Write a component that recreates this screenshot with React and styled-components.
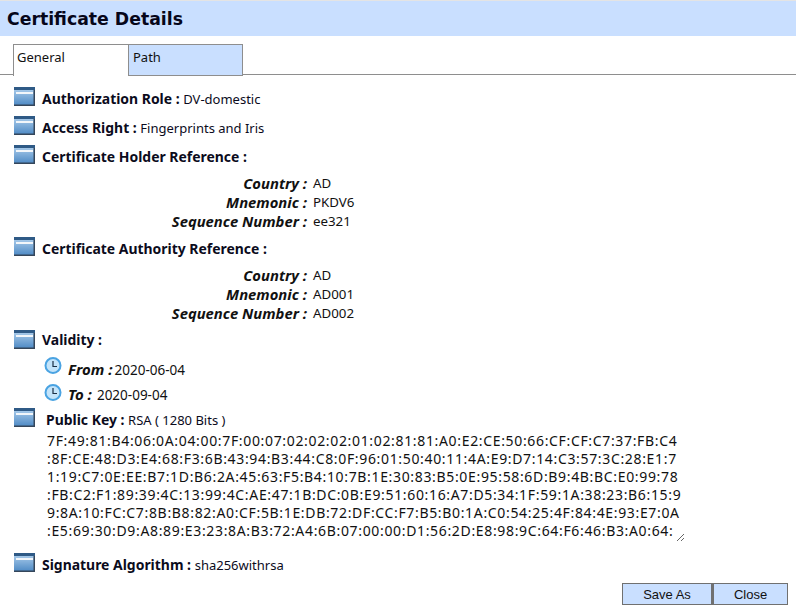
import React from "react";
import styled, { createGlobalStyle } from "styled-components";

const Global = createGlobalStyle`
  html, body { margin: 0; padding: 0; background: #fff; }
  body { font-family: "Noto Sans", "Open Sans", sans-serif; color: #111; }
`;
const Page = styled.div`
  width: 796px; height: 611px; display: flex; flex-direction: column; overflow: hidden; background: #fff;
  border-top: 1px solid #e4e4e4; box-sizing: border-box;
`;
const Header = styled.h1`
  margin: 0; height: 35px; line-height: 37px; padding-left: 7px; background: #c9dfff;
  font-size: 17.3px; font-weight: 700; color: #06061a; font-family: "DejaVu Sans", sans-serif;
`;
const TabBar = styled.div`
  display: flex; margin-top: 8px; padding-left: 13px; border-bottom: 1px solid #8e8e8e; box-sizing: border-box; height: 31px;
`;
const Tab = styled.div`
  width: ${p => p.$active ? 116 : 114}px; height: 32px; box-sizing: border-box;
  border: 1px solid #8e8e8e; border-left-width: ${p => p.$active ? "1px" : "0"};
  border-bottom-width: ${p => p.$active ? "0" : "1px"};
  background: ${p => p.$active ? "#fff" : "#c9dfff"};
  padding: 3px ${p => p.$active ? 3 : 4}px; font-size: 13px; line-height: 18px;
`;
const Body = styled.div`
  display: flex; flex-direction: column; padding: 12px 0 0 14px; flex: 1;
`;
const Row = styled.div`
  display: flex; align-items: flex-start; height: ${p => p.$h || 29}px; gap: 7px;
`;
const BarIcon = () => (
  <svg width="21" height="19" viewBox="0 0 21 19">
    <defs><linearGradient id="b" x1="0" y1="0" x2="0" y2="1"><stop offset="0" stopColor="#b4d3ef"/><stop offset="1" stopColor="#4a87c3"/></linearGradient></defs>
    <rect x="0" y="0" width="21" height="19" fill="url(#b)"/>
    <rect x="0" y="0" width="21" height="3" fill="#2f5a86"/>
    <rect x="2" y="5" width="17" height="2" fill="#f2f6fa"/>
    <rect x="19.5" y="3" width="1.5" height="16" fill="#35465a"/>
    <rect x="0" y="17.5" width="21" height="1.5" fill="#35465a"/>
  </svg>
);
const ClockIcon = () => (
  <svg width="18" height="17" viewBox="0 0 18 17">
    <circle cx="9" cy="8.5" r="7.5" fill="#c4e4fa" stroke="#4aa3e2" strokeWidth="2"/>
    <path d="M9 4V9.5H13" fill="none" stroke="#1c2f44" strokeWidth="1.2"/>
  </svg>
);
const Label = styled.span`
  font-weight: 700; font-size: 13.95px; line-height: 18px; margin-top: ${p => p.$top ?? 3}px; color: #0b0b1c;
`;
const Value = styled.span`font-weight: 400; font-size: 13px;`;
const SubGrid = styled.div`
  display: grid; grid-template-columns: 293px auto; justify-content: start; column-gap: 6px; grid-auto-rows: 19px; height: ${p => p.$h}px;
`;
const SubKey = styled.span`text-align: right; font-style: italic; font-weight: 700; font-size: 14.8px; line-height: 19px; white-space: nowrap;`;
const SubVal = styled.span`font-size: 13.3px; line-height: 19px;`;
const ClockRow = styled.div`
  display: flex; align-items: flex-start; gap: 6px; height: ${p => p.$h}px; padding-left: 30px; font-size: 13.5px;
`;
const ClockText = styled.span`line-height: 18px; margin-top: ${p => p.$top}px;`;
const ClockKey = styled.b`font-style: italic; font-size: 15px; margin-right: ${p => p.$gap}px;`;
const KeyBlock = styled.div`display: flex; flex-direction: column; flex: 1;`;
const KeyTitle = styled.div`padding-left: 4px; line-height: 18px; margin-top: 3px; display: flex;`;
const KeyArea = styled.textarea`
  width: 640px; height: 112px; margin: 1px 0 0 3px; padding: 2px; border: none; outline: none; background: #fff; box-sizing: border-box;
  font-family: "Noto Sans", sans-serif; font-size: 14px; letter-spacing: .66px; line-height: 18px; color: #111; white-space: pre; overflow: hidden; resize: both;
`;
const Footer = styled.div`
  display: flex; justify-content: flex-end; padding-right: 8px; margin-top: auto; margin-bottom: 6px;
`;
const Btn = styled.button`
  width: 90px; height: 22px; box-sizing: border-box; border: 1px solid #707070; background: #c9dfff; font-family: "Liberation Sans", sans-serif; font-size: 13px; color: #111; padding: 0;
  & + & { width: 76px; border-left-width: 2px; }
`;
const KEY = `7F:49:81:B4:06:0A:04:00:7F:00:07:02:02:02:01:02:81:81:A0:E2:CE:50:66:CF:CF:C7:37:FB:C4
:8F:CE:48:D3:E4:68:F3:6B:43:94:B3:44:C8:0F:96:01:50:40:11:4A:E9:D7:14:C3:57:3C:28:E1:7
1:19:C7:0E:EE:B7:1D:B6:2A:45:63:F5:B4:10:7B:1E:30:83:B5:0E:95:58:6D:B9:4B:BC:E0:99:78
:FB:C2:F1:89:39:4C:13:99:4C:AE:47:1B:DC:0B:E9:51:60:16:A7:D5:34:1F:59:1A:38:23:B6:15:9
9:8A:10:FC:C7:8B:B8:82:A0:CF:5B:1E:DB:72:DF:CC:F7:B5:B0:1A:C0:54:25:4F:84:4E:93:E7:0A
:E5:69:30:D9:A8:89:E3:23:8A:B3:72:A4:6B:07:00:00:D1:56:2D:E8:98:9C:64:F6:46:B3:A0:64:`;

const Sub = ({ rows, h }) => (
  <SubGrid $h={h}>
    {rows.map(([k, v]) => (
      <React.Fragment key={k}><SubKey>{k} :</SubKey><SubVal>{v}</SubVal></React.Fragment>
    ))}
  </SubGrid>
);

export default function App() {
  return (
    <Page>
      <Global />
      <Header>Certificate Details</Header>
      <TabBar>
        <Tab $active>General</Tab>
        <Tab>Path</Tab>
      </TabBar>
      <Body>
        <Row><BarIcon /><Label>Authorization Role : <Value>DV-domestic</Value></Label></Row>
        <Row><BarIcon /><Label>Access Right : <Value>Fingerprints and Iris</Value></Label></Row>
        <Row><BarIcon /><Label>Certificate Holder Reference :</Label></Row>
        <Sub h={63} rows={[["Country", "AD"], ["Mnemonic", "PKDV6"], ["Sequence Number", "ee321"]]} />
        <Row><BarIcon /><Label>Certificate Authority Reference :</Label></Row>
        <Sub h={64} rows={[["Country", "AD"], ["Mnemonic", "AD001"], ["Sequence Number", "AD002"]]} />
        <Row $h={27}><BarIcon /><Label $top={1}>Validity :</Label></Row>
        <ClockRow $h={27}><ClockIcon /><ClockText $top={3}><ClockKey $gap={2}>From :</ClockKey>2020-06-04</ClockText></ClockRow>
        <ClockRow $h={24}><ClockIcon /><ClockText $top={1}><ClockKey $gap={5}>To :</ClockKey>2020-09-04</ClockText></ClockRow>
        <Row $h={145}><BarIcon />
          <KeyBlock>
            <KeyTitle><Label $top={0}>Public Key : <Value>RSA ( 1280 Bits )</Value></Label></KeyTitle>
            <KeyArea readOnly value={KEY} />
          </KeyBlock>
        </Row>
        <Row $h={24}><BarIcon /><Label>Signature Algorithm : <Value>sha256withrsa</Value></Label></Row>
        <Footer><Btn>Save As</Btn><Btn>Close</Btn></Footer>
      </Body>
    </Page>
  );
}
